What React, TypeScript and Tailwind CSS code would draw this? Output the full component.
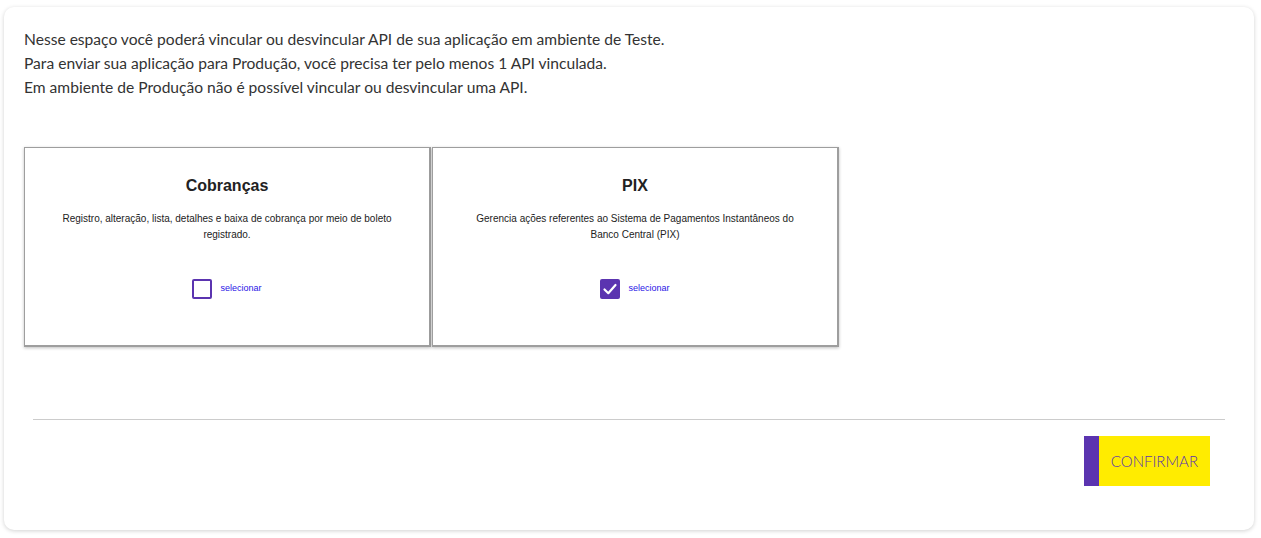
import { useState } from "react";

const apis = [
  {
    name: "Cobranças",
    description: "Registro, alteração, lista, detalhes e baixa de cobrança por meio de boleto registrado.",
  },
  {
    name: "PIX",
    description: "Gerencia ações referentes ao Sistema de Pagamentos Instantâneos do Banco Central (PIX)",
  },
];

export default function App() {
  const [selected, setSelected] = useState<Record<string, boolean>>({ PIX: true });

  return (
    <div className="min-h-screen bg-white pl-[4px] pr-[7px] pt-[7px] pb-[8px] font-['Lato',sans-serif]">
      <div className="rounded-[10px] bg-white shadow-[0_1px_4px_rgba(0,0,0,0.18)] pl-[20px] pr-[29px] pt-[20px] pb-[44px]">
        {/* Intro */}
        <div className="text-[15.6px] leading-[24px] text-[#333]">
          <p>Nesse espaço você poderá vincular ou desvincular API de sua aplicação em ambiente de Teste.</p>
          <p>Para enviar sua aplicação para Produção, você precisa ter pelo menos 1 API vinculada.</p>
          <p>Em ambiente de Produção não é possível vincular ou desvincular uma API.</p>
        </div>

        {/* Cards */}
        <div className="mt-[48px] flex gap-[1px] font-['Liberation_Sans',Arial,sans-serif]">
          {apis.map((api) => {
            const checked = !!selected[api.name];
            return (
              <div
                key={api.name}
                className="w-[407px] h-[200px] bg-white border border-[#9e9e9e] border-r-2 border-b-2 shadow-[0_1px_3px_rgba(0,0,0,0.25)] flex flex-col items-center pt-[28px] px-[35px]"
              >
                <h3 className="text-[16px] font-bold text-[#222] leading-[20px]">{api.name}</h3>
                <p className="mt-[15px] text-[10px] leading-[16px] text-[#222] text-center">{api.description}</p>
                <label className="mt-auto mb-[46px] flex items-center gap-[8px] cursor-pointer">
                  <button
                    onClick={() =>
                      setSelected((s) => ({ ...s, [api.name]: !s[api.name] }))
                    }
                    className={`w-[20px] h-[20px] rounded-[2px] flex items-center justify-center ${
                      checked ? "bg-[#5b34b0]" : "border-2 border-[#5b34b0] bg-white"
                    }`}
                  >
                    {checked && (
                      <svg viewBox="0 0 20 20" className="w-[20px] h-[20px]">
                        <path d="M4.5 10.5 L8.3 14.2 L15.5 6" fill="none" stroke="white" strokeWidth="2.2" strokeLinecap="round" strokeLinejoin="round" />
                      </svg>
                    )}
                  </button>
                  <span className="text-[9px] text-[#2a14e6]">selecionar</span>
                </label>
              </div>
            );
          })}
        </div>

        {/* Divider */}
        <div className="mt-[72px] ml-[9px] border-t border-[#cccccc]" />

        {/* Actions */}
        <div className="mt-[16px] flex justify-end pr-[15px]">
          <button className="flex h-[50px] items-stretch">
            <span className="w-[15px] bg-[#5b34b0]" />
            <span className="flex items-center bg-[#ffec00] px-[12px] text-[15px] text-[#5b34b0] font-light">
              CONFIRMAR
            </span>
          </button>
        </div>
      </div>
    </div>
  );
}
